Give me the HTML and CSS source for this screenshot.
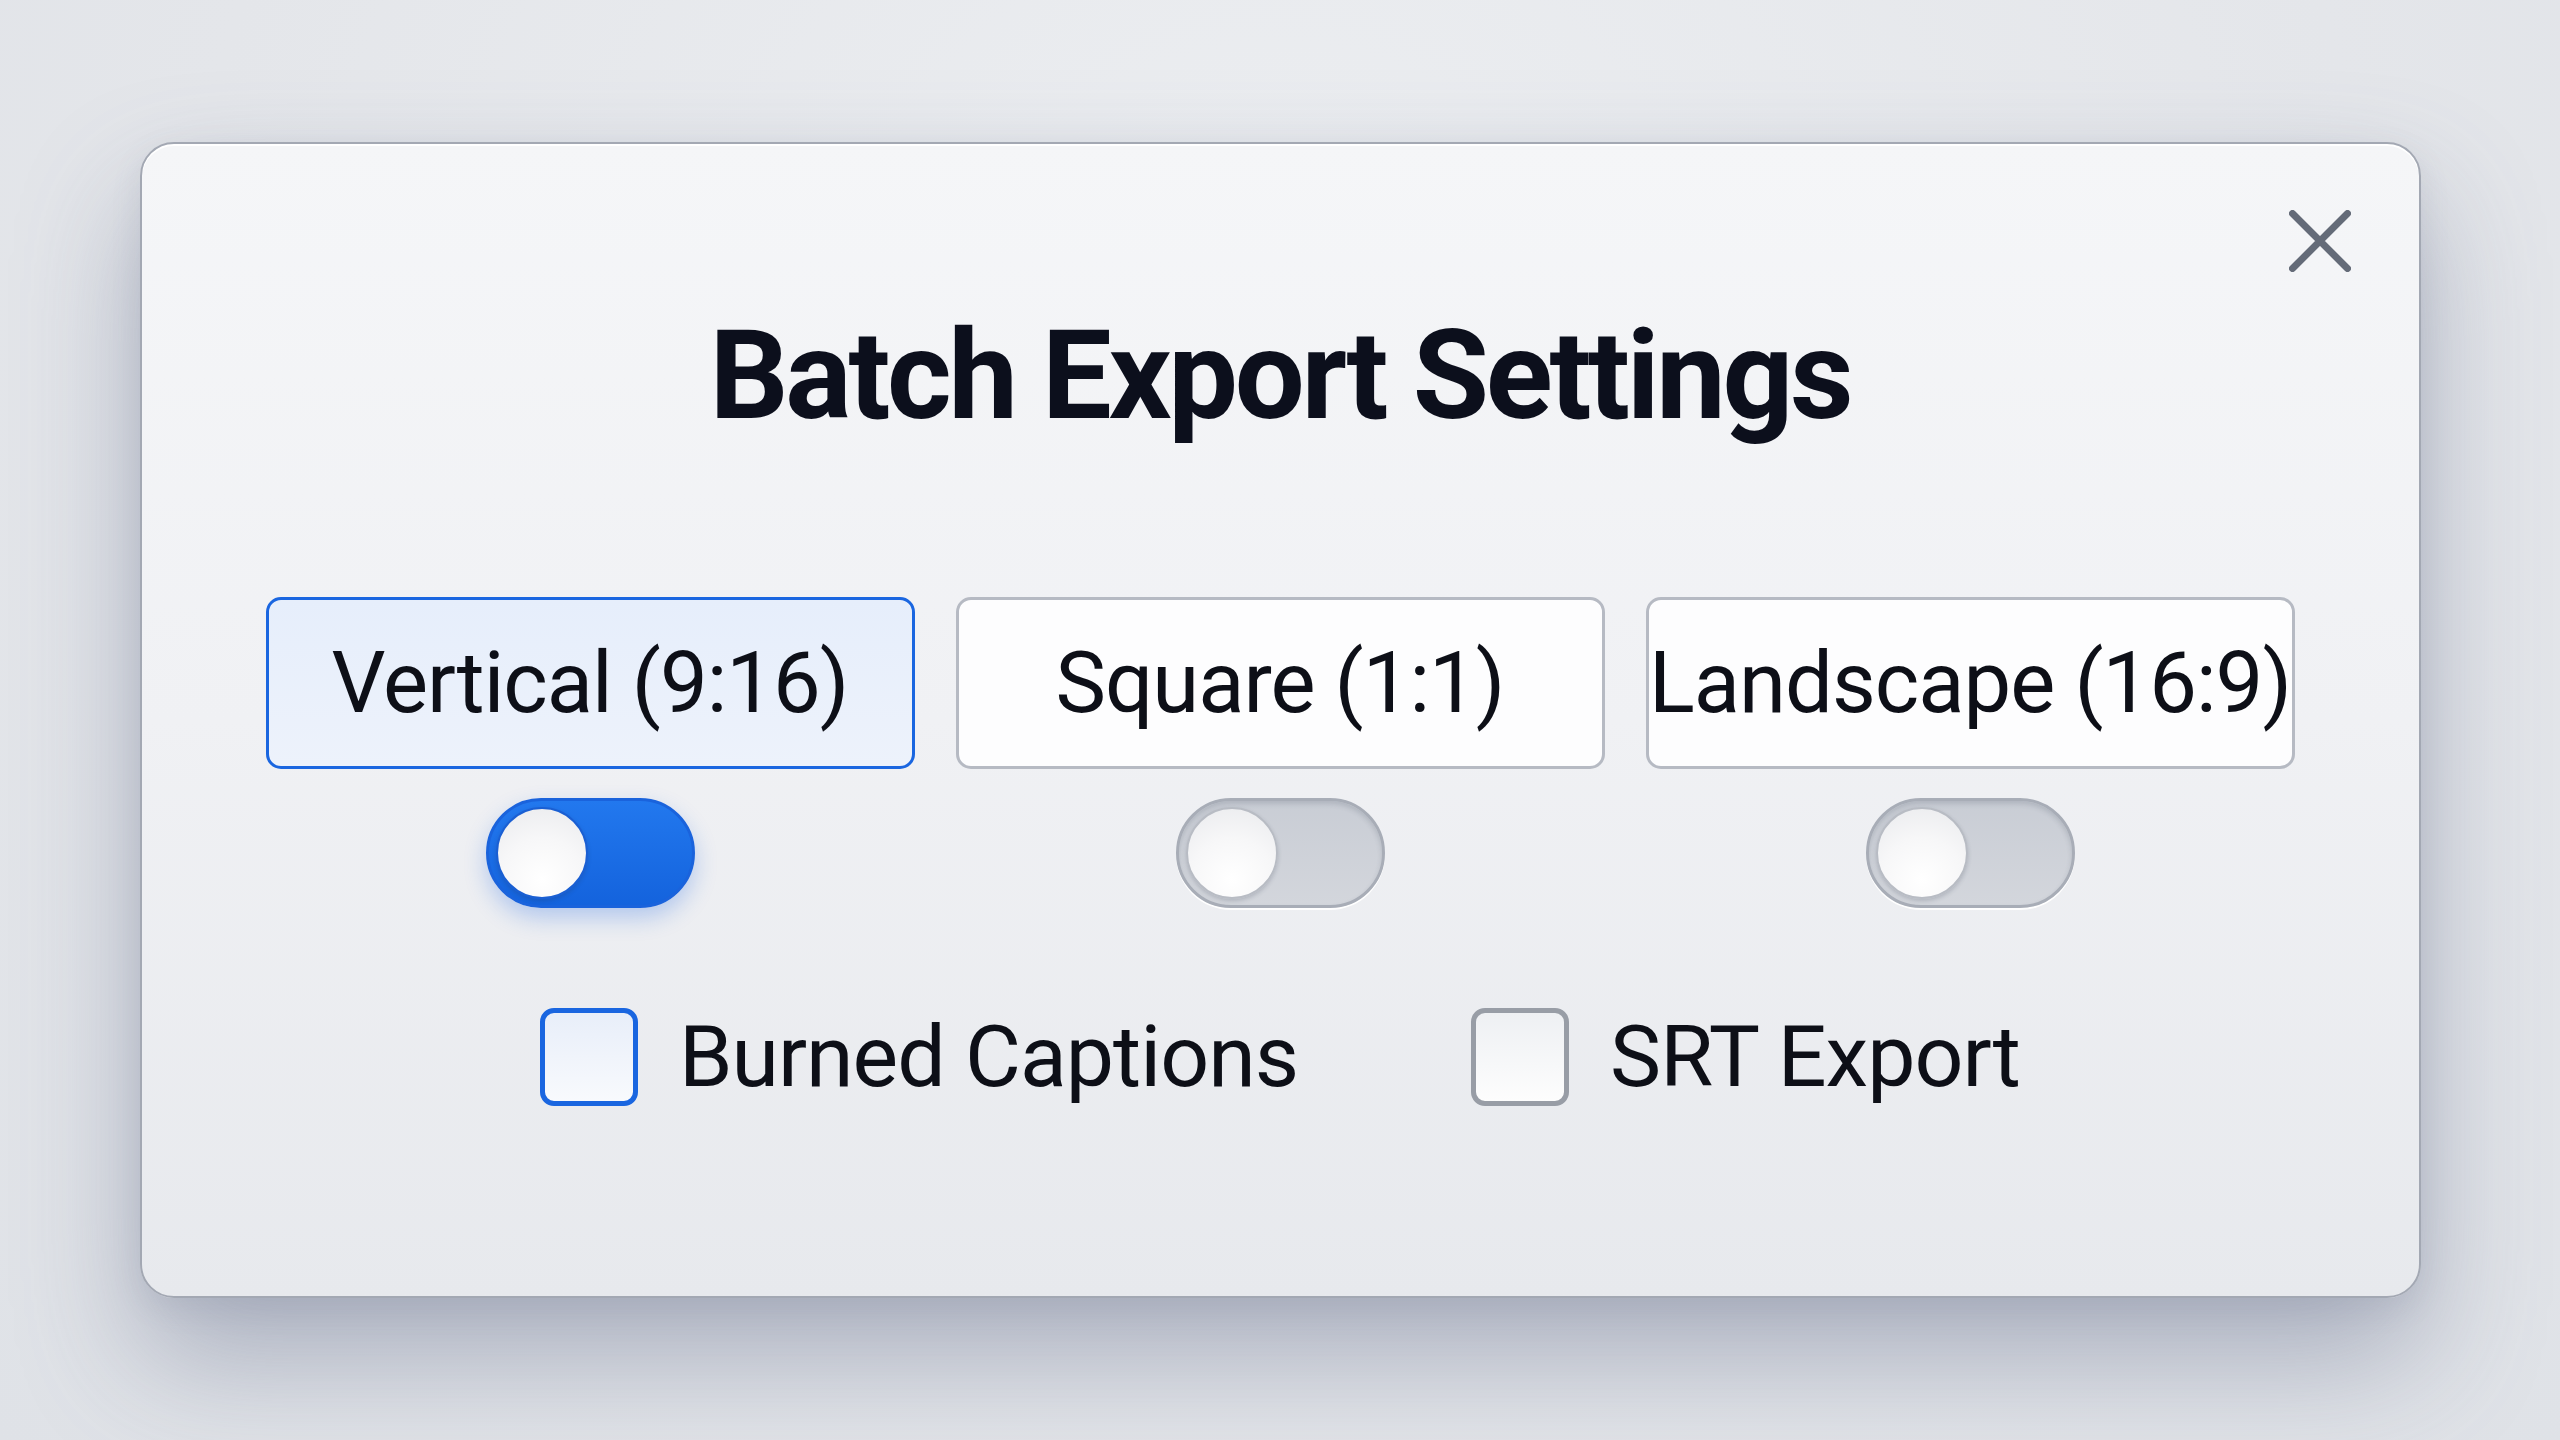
FILE: index.html
```html
<!DOCTYPE html>
<html lang="en">
<head>
<meta charset="utf-8">
<title>Batch Export Settings</title>
<link rel="stylesheet" href="styles.css">
</head>
<body>
<div class="stage">
  <section class="dialog">
    <button class="close" aria-label="Close">
      <svg viewBox="0 0 62 62" width="62" height="62"><path d="M3.5 3.5 L58.5 58.5 M58.5 3.5 L3.5 58.5" stroke="#646b78" stroke-width="7" stroke-linecap="round" fill="none"/></svg>
    </button>
    <h1 class="title">Batch Export Settings</h1>
    <div class="formats">
      <div class="format">
        <div class="option selected">Vertical (9:16)</div>
        <div class="toggle on"><span class="knob"></span></div>
      </div>
      <div class="format">
        <div class="option">Square (1:1)</div>
        <div class="toggle"><span class="knob"></span></div>
      </div>
      <div class="format">
        <div class="option">Landscape (16:9)</div>
        <div class="toggle"><span class="knob"></span></div>
      </div>
    </div>
    <div class="checks">
      <label class="check"><span class="box focus"></span><span class="check-label">Burned Captions</span></label>
      <label class="check"><span class="box"></span><span class="check-label">SRT Export</span></label>
    </div>
  </section>
</div>
</body>
</html>
```

FILE: styles.css
```css
* { box-sizing: border-box; }
html, body { margin: 0; padding: 0; }
body {
  width: 2560px;
  height: 1440px;
  font-family: Roboto, "Liberation Sans", sans-serif;
  background: radial-gradient(ellipse at 50% 20%, #eceef1 0%, #e4e6ea 60%, #dfe2e7 100%);
  overflow: hidden;
}
.stage {
  width: 2560px;
  height: 1440px;
  display: flex;
  align-items: center;
  justify-content: center;
}
.dialog {
  position: relative;
  width: 2281px;
  height: 1156px;
  border: 2px solid #a3a8b3;
  border-radius: 34px;
  background: linear-gradient(180deg, #f5f6f8 0%, #f0f1f4 50%, #e7e9ed 100%);
  box-shadow: 0 60px 120px rgba(90, 100, 130, 0.42), 0 10px 30px rgba(95, 105, 135, 0.12), inset 0 2px 0 #ffffff;
  padding: 170px 124px 0;
  display: flex;
  flex-direction: column;
  align-items: stretch;
}
.close {
  position: absolute;
  top: 66px;
  right: 68px;
  width: 62px;
  height: 62px;
  padding: 0;
  border: 0;
  background: none;
}
.close svg { display: block; }
.title {
  margin: 0;
  text-align: center;
  font-size: 124px;
  line-height: 124px;
  font-weight: 700;
  color: #0c0f1c;
  letter-spacing: -3.3px;
}
.formats {
  margin-top: 159px;
  display: grid;
  grid-template-columns: repeat(3, minmax(0, 1fr));
  column-gap: 41px;
}
.format {
  display: flex;
  flex-direction: column;
  align-items: center;
  gap: 29px;
  min-width: 0;
}
.option {
  width: 100%;
  height: 172px;
  display: flex;
  align-items: center;
  justify-content: center;
  border: 3px solid #b6bac3;
  border-radius: 15px;
  background: #fdfdfe;
  font-size: 85px;
  color: #0d0f17;
  white-space: nowrap;
  letter-spacing: -1px;
  overflow: visible;
}
.option.selected {
  border-color: #1a66e0;
  background: linear-gradient(180deg, #e6eefb 0%, #edf2fb 100%);
}
.toggle {
  width: 209px;
  height: 110px;
  border-radius: 55px;
  padding: 7px;
  display: flex;
  align-items: center;
  background: linear-gradient(180deg, #c9cdd5 0%, #d3d6dc 100%);
  border: 3px solid #a8adb7;
  box-shadow: 0 2px 0 #ffffff, inset 0 3px 5px rgba(60, 70, 90, 0.18);
}
.knob {
  width: 92px;
  height: 92px;
  border-radius: 50%;
  background: radial-gradient(circle at 50% 80%, #ffffff 0%, #f7f7f8 50%, #e9eaed 100%);
  border: 2px solid #b8bcc4;
  box-shadow: 0 2px 4px rgba(40, 50, 70, 0.2);
}
.toggle.on {
  background: linear-gradient(180deg, #2278ee 0%, #1463dd 100%);
  border-color: #1a63dc;
  box-shadow: 0 10px 22px rgba(30, 100, 225, 0.28);
}
.toggle.on .knob {
  border-color: #1a5fd3;
}
.checks {
  margin-top: 98px;
  display: flex;
  justify-content: center;
  gap: 173px;
}
.check {
  display: flex;
  align-items: center;
  gap: 41px;
}
.box {
  width: 98px;
  height: 98px;
  border: 5px solid #989da6;
  border-radius: 14px;
  background: linear-gradient(180deg, #eef0f3 0%, #fdfdfd 100%);
}
.box.focus {
  border-color: #1a66e0;
  background: linear-gradient(180deg, #e8eef9 0%, #f8fafd 100%);
}
.check-label {
  font-size: 86px;
  color: #0d0f17;
  letter-spacing: -1px;
}
```
